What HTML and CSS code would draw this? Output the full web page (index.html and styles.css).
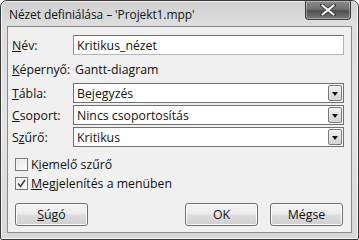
FILE: index.html
```html
<!DOCTYPE html>
<html lang="hu">
<head>
<meta charset="utf-8">
<title>Nézet definiálása</title>
<link rel="stylesheet" href="styles.css">
</head>
<body>
<div class="window">
  <div class="titlebar">
    <span class="title">Nézet definiálása – 'Projekt1.mpp'</span>
    <div class="close">
      <svg width="16" height="12" viewBox="0 0 16 12">
        <path d="M2 1 L14 11 M14 1 L2 11" stroke="#3a3a3a" stroke-width="4" stroke-linecap="round"/>
        <path d="M2.5 1.5 L13.5 10.5 M13.5 1.5 L2.5 10.5" stroke="#fff" stroke-width="2.2" stroke-linecap="round"/>
      </svg>
    </div>
  </div>
  <div class="client">
    <div class="row r-name">
      <span class="label"><u>N</u>év:</span>
      <div class="field">Kritikus_nézet</div>
    </div>
    <div class="row r-screen">
      <span class="label"><u>K</u>épernyő:</span>
      <span class="value">Gantt-diagram</span>
    </div>
    <div class="row r-sel">
      <span class="label"><u>T</u>ábla:</span>
      <div class="field select">Bejegyzés<span class="drop"></span></div>
    </div>
    <div class="row r-sel">
      <span class="label"><u>C</u>soport:</span>
      <div class="field select">Nincs csoportosítás<span class="drop"></span></div>
    </div>
    <div class="row r-sel">
      <span class="label">S<u>z</u>űrő:</span>
      <div class="field select">Kritikus<span class="drop"></span></div>
    </div>
    <div class="checks">
      <div class="check"><span class="box"></span><span>K<u>i</u>emelő szűrő</span></div>
      <div class="check"><span class="box checked">
        <svg width="11" height="11" viewBox="0 0 11 11"><path d="M2 5.5 L4.5 8.5 L9 2" fill="none" stroke="#444" stroke-width="1.6"/></svg>
      </span><span><u>M</u>egjelenítés a menüben</span></div>
    </div>
    <div class="buttons">
      <button class="btn"><u>S</u>úgó</button>
      <span class="spacer"></span>
      <button class="btn">OK</button>
      <button class="btn">Mégse</button>
    </div>
  </div>
</div>
</body>
</html>
```
FILE: styles.css
```css
* { box-sizing: border-box; }
html, body { margin: 0; padding: 0; background: #fff; }
body {
  font-family: "Open Sans", "Noto Sans", "DejaVu Sans", sans-serif;
  font-size: 12.3px;
  color: #111;
}
u { text-decoration: underline; text-underline-offset: 1px; }
.window {
  width: 359px;
  height: 240px;
  border: 1px solid #3a3a3a;
  border-radius: 7px 7px 2px 2px;
  background: linear-gradient(180deg, #cfcfcf 0%, #dedede 10%, #e4e4e4 50%, #d8d8d8 100%);
  padding: 0 6px 6px 6px;
  display: flex;
  flex-direction: column;
  box-shadow: inset 0 0 0 1px #f4f4f4;
}
.titlebar {
  height: 25px;
  display: flex;
  align-items: flex-start;
}
.title {
  font-size: 12px;
  padding: 5px 0 0 2px;
  color: #151515;
  letter-spacing: -0.1px;
}
.close {
  margin-left: auto;
  margin-right: 1px;
  width: 46px;
  height: 19px;
  border: 1px solid #3c3c3c;
  border-top: none;
  border-radius: 0 0 4px 4px;
  background: linear-gradient(180deg, #8c8c8c 0%, #6f6f6f 45%, #4f4f4f 55%, #7a7a7a 100%);
  display: flex;
  align-items: center;
  justify-content: center;
  box-shadow: inset 0 0 0 1px rgba(255,255,255,0.35);
}
.client {
  flex: 1;
  border: 1px solid #8a8a8a;
  background: #f0f0f0;
  padding: 8px 7px 6px 4px;
  display: flex;
  flex-direction: column;
}
.row {
  display: flex;
  align-items: center;
}
.label {
  width: 61px;
  flex: none;
}
.r-name { height: 20px; }
.r-screen { height: 20px; margin: 4px 0 4px; }
.r-sel { height: 20px; margin-bottom: 2px; }
.value { padding-left: 2px; }
.field {
  flex: 1;
  height: 100%;
  background: #fff;
  border: 1px solid #7a7a7a;
  border-color: #6e6e6e #b5b5b5 #b5b5b5 #8a8a8a;
  padding: 0 3px;
  display: flex;
  align-items: center;
  position: relative;
}
.select { border: 1px solid #707070; }
.drop {
  position: absolute;
  right: 1px;
  top: 1px;
  bottom: 1px;
  width: 14px;
  border: 1px solid #7a7a7a;
  border-radius: 2px;
  background: linear-gradient(180deg, #f4f4f4 0%, #e2e2e2 50%, #d4d4d4 100%);
}
.drop::after {
  content: "";
  position: absolute;
  left: 3px;
  top: 6px;
  border-left: 3.5px solid transparent;
  border-right: 3.5px solid transparent;
  border-top: 4px solid #111;
}
.checks {
  margin: 9px 0 0 3px;
  display: flex;
  flex-direction: column;
  gap: 6px;
}
.check {
  display: flex;
  align-items: center;
  gap: 3px;
  height: 13px;
}
.box {
  width: 13px;
  height: 13px;
  border: 1px solid #777;
  background: linear-gradient(135deg, #e6e6e6, #fdfdfd);
  box-shadow: inset 0 0 0 1px #f5f5f5;
  display: flex;
  align-items: center;
  justify-content: center;
}
.buttons {
  margin-top: auto;
  display: flex;
  gap: 12px;
  padding: 0 1px 0 3px;
}
.spacer { flex: 1; }
.btn {
  width: 73px;
  height: 23px;
  font: inherit;
  color: #111;
  border: 1px solid #707070;
  border-radius: 3px;
  background: linear-gradient(180deg, #f4f4f4 0%, #ebebeb 48%, #dddddd 52%, #cfcfcf 100%);
  box-shadow: inset 0 0 0 1px #fbfbfb;
  padding: 0;
}
```
